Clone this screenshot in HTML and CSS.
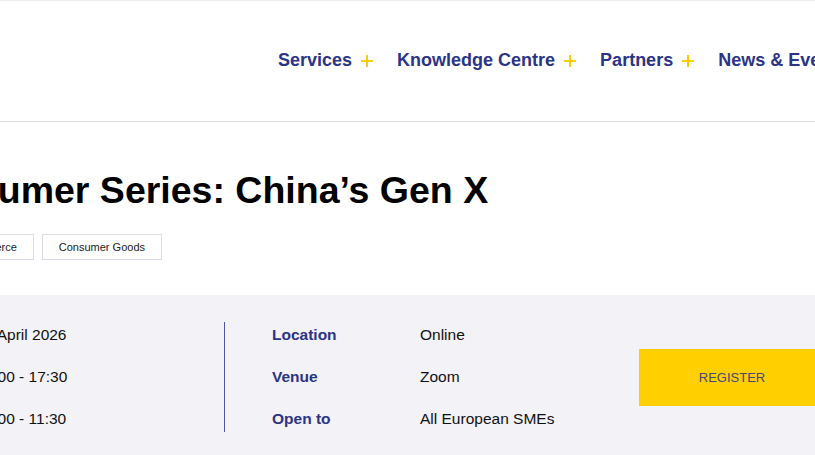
FILE: index.html
```html
<!DOCTYPE html>
<html lang="en">
<head>
<meta charset="utf-8">
<title>Consumer Series: China’s Gen X</title>
<link rel="stylesheet" href="styles.css">
</head>
<body>
<header class="site-header">
  <nav class="main-nav">
    <a class="nav-item" href="#">Services<svg class="plus" viewBox="0 0 12 12"><path d="M6 0V12M0 6H12"/></svg></a>
    <a class="nav-item" href="#">Knowledge Centre<svg class="plus" viewBox="0 0 12 12"><path d="M6 0V12M0 6H12"/></svg></a>
    <a class="nav-item" href="#">Partners<svg class="plus" viewBox="0 0 12 12"><path d="M6 0V12M0 6H12"/></svg></a>
    <a class="nav-item" href="#">News &amp; Events<svg class="plus" viewBox="0 0 12 12"><path d="M6 0V12M0 6H12"/></svg></a>
  </nav>
</header>

<main>
  <section class="event-head">
    <h1 class="event-title">Consumer Series: China’s Gen X</h1>
    <ul class="tags">
      <li class="tag">Commerce</li>
      <li class="tag">Consumer Goods</li>
    </ul>
  </section>

  <section class="details">
    <div class="details-inner">
      <dl class="info-col info-when">
        <dt>Date</dt><dd>14 April 2026</dd>
        <dt>Time (China)</dt><dd>16:00 - 17:30</dd>
        <dt>Time (CET)</dt><dd>10:00 - 11:30</dd>
      </dl>
      <div class="divider"></div>
      <dl class="info-col info-where">
        <dt>Location</dt><dd>Online</dd>
        <dt>Venue</dt><dd>Zoom</dd>
        <dt>Open to</dt><dd>All European SMEs</dd>
      </dl>
      <a class="register" href="#">REGISTER</a>
    </div>
  </section>
</main>
</body>
</html>
```

FILE: styles.css
```css
* { box-sizing: border-box; }

html, body {
  margin: 0;
  padding: 0;
  background: #ffffff;
  overflow: hidden;
  font-family: "Liberation Sans", Arial, sans-serif;
}

.site-header {
  height: 122px;
  border-top: 1px solid #ececf0;
  border-bottom: 1px solid #dddce6;
  display: flex;
  align-items: center;
}

.main-nav {
  display: flex;
  align-items: center;
  margin-left: 278px;
  white-space: nowrap;
  gap: 24px;
  padding-bottom: 1px;
}

.nav-item {
  display: flex;
  align-items: center;
  font-size: 18px;
  font-weight: 700;
  color: #2b3486;
  text-decoration: none;
}

.plus {
  width: 12px;
  height: 12px;
  margin-left: 9px;
  stroke: #ffcc00;
  stroke-width: 2;
  fill: none;
}

.event-head {
  margin-left: -96px;
  padding-top: 46px;
  padding-bottom: 35px;
}

.event-title {
  margin: 0;
  font-size: 37.5px;
  line-height: 44px;
  font-weight: 700;
  color: #000000;
  white-space: nowrap;
}

.tags {
  list-style: none;
  margin: 22px 0 0;
  padding: 0;
  display: flex;
  gap: 8px;
  margin-left: 42px;
}

.tag {
  height: 26px;
  padding: 0 16px;
  border: 1px solid #dcdbe9;
  font-size: 11px;
  line-height: 24px;
  color: #222222;
  white-space: nowrap;
}

.details {
  background: #f2f2f7;
  padding: 27px 0 40px;
}

.details-inner {
  display: flex;
  align-items: center;
  margin-left: -172px;
  white-space: nowrap;
}

.info-col {
  margin: 0;
  display: grid;
  grid-template-columns: 148px auto;
  row-gap: 16px;
  font-size: 15.5px;
  line-height: 26px;
  flex-shrink: 0;
}

.info-col dt {
  font-weight: 700;
  color: #2b3486;
}

.info-col dd {
  margin: 0;
  color: #111111;
}

.info-when {
  width: 350px;
}

.info-where {
  width: 367px;
}

.divider {
  width: 1px;
  height: 110px;
  flex-shrink: 0;
  background: #4f55a3;
  margin: 0 47px 0 46px;
}

.register {
  display: flex;
  align-items: center;
  justify-content: center;
  width: 186px;
  height: 57px;
  flex-shrink: 0;
  background: #ffcf00;
  color: #4a4870;
  font-size: 13px;
  text-decoration: none;
}
```
